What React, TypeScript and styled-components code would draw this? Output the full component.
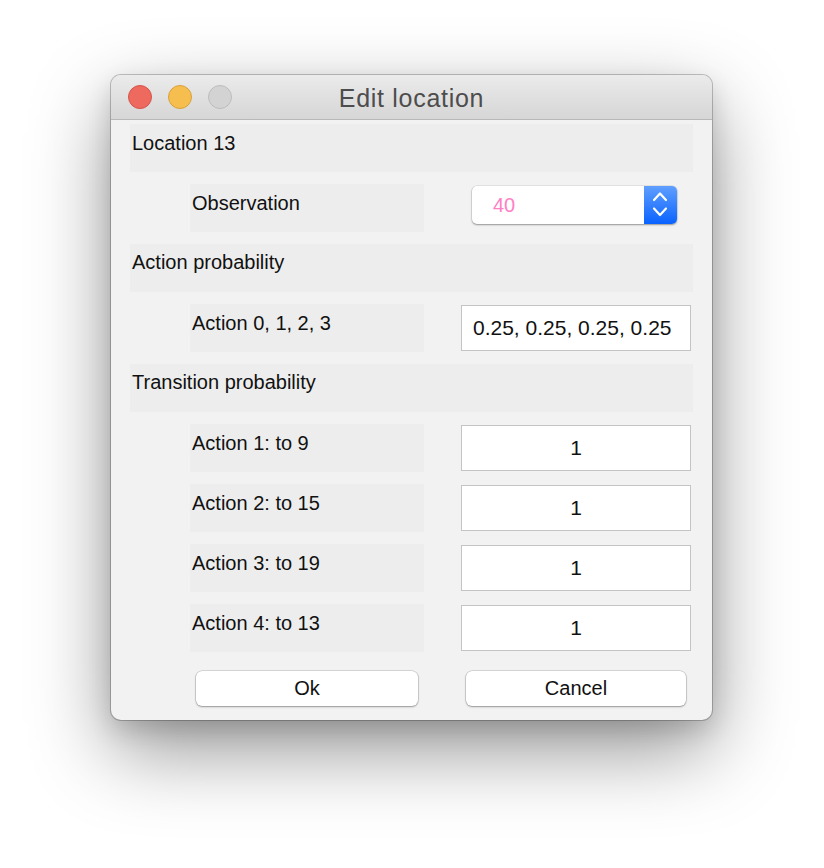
import React from 'react';
import styled, { createGlobalStyle } from 'styled-components';

const GlobalStyle = createGlobalStyle`
  body {
    margin: 0;
    background: #ffffff;
    font-family: 'Liberation Sans', Arial, sans-serif;
  }
`;

const Page = styled.div`
  padding: 75px 0 0 111px;
  height: 793px;
`;

const Window = styled.div`
  width: 601px;
  height: 645px;
  border-radius: 10px;
  overflow: hidden;
  background: #f2f2f2;
  box-shadow: 0 0 0 1px rgba(0, 0, 0, 0.22), 0 30px 80px rgba(0, 0, 0, 0.42),
    0 10px 24px rgba(0, 0, 0, 0.14);
`;

const TitleBar = styled.div`
  height: 44px;
  display: grid;
  grid-template-columns: 1fr auto 1fr;
  align-items: center;
  background: linear-gradient(#ebebeb, #d6d6d6);
  border-bottom: 1px solid #b8b8b8;
`;

const Lights = styled.div`
  display: flex;
  gap: 16px;
  padding-left: 17px;
`;

interface ILightProps {
  fill: string;
  edge: string;
}

const Light = styled.span<ILightProps>`
  width: 24px;
  height: 24px;
  box-sizing: border-box;
  border-radius: 50%;
  background: ${({ fill }) => fill};
  border: 1px solid ${({ edge }) => edge};
`;

const Title = styled.div`
  padding-top: 3px;
  font-size: 25px;
  letter-spacing: 0.7px;
  color: #4d4d4d;
`;

const Content = styled.div`
  padding: 4px 19px 0;
  display: flex;
  flex-direction: column;
  gap: 12px;
`;

interface IPanelProps {
  header?: boolean;
}

const Panel = styled.div<IPanelProps>`
  box-sizing: border-box;
  height: 48px;
  padding: ${({ header }) => (header ? '7px 2px' : '8px 2px')};
  background: #ededed;
  font-size: 20px;
  line-height: 22px;
  color: #111;
  white-space: nowrap;
`;

const SubRow = styled.div`
  display: flex;
  align-items: flex-start;
  padding-left: 60px;
  height: 48px;
`;

const SubLabel = styled(Panel)`
  width: 234px;
`;

const Field = styled.div`
  box-sizing: border-box;
  width: 230px;
  height: 46px;
  margin: 1px 0 0 37px;
  background: #ffffff;
  border: 1px solid #c4c4c4;
  display: flex;
  align-items: center;
  font-size: 21px;
  color: #111;
`;

interface IFieldTextProps {
  centered?: boolean;
}

const FieldText = styled.span<IFieldTextProps>`
  flex: 1;
  padding: 0 11px;
  text-align: ${({ centered }) => (centered ? 'center' : 'left')};
`;

const Combo = styled.div`
  width: 205px;
  height: 38px;
  margin: 2px 0 0 48px;
  display: flex;
  border-radius: 5px;
  background: #ffffff;
  box-shadow: 0 0 0 0.5px rgba(0, 0, 0, 0.12), 0 1px 2px rgba(0, 0, 0, 0.35);
  overflow: hidden;
`;

const ComboValue = styled.span`
  flex: 1;
  padding-left: 21px;
  font-size: 20px;
  line-height: 38px;
  color: #ff80c4;
`;

const Stepper = styled.div`
  width: 33px;
  height: 38px;
  background: linear-gradient(#5f9fff, #0a63ff);
`;

const ButtonRow = styled.div`
  display: flex;
  gap: 48px;
  padding-left: 66px;
  margin-top: 7px;
`;

interface IButtonProps {
  width: number;
}

const Button = styled.div<IButtonProps>`
  width: ${({ width }) => width}px;
  height: 35px;
  border-radius: 6px;
  background: #ffffff;
  box-shadow: 0 0 0 0.5px rgba(0, 0, 0, 0.22), 0 1px 2px rgba(0, 0, 0, 0.3);
  font-size: 20px;
  line-height: 35px;
  text-align: center;
  color: #111;
`;

const rows = [
  { label: 'Action 1: to 9', value: '1' },
  { label: 'Action 2: to 15', value: '1' },
  { label: 'Action 3: to 19', value: '1' },
  { label: 'Action 4: to 13', value: '1' }
];

const StepperIcon = () => (
  <svg width="33" height="38" viewBox="0 0 33 38">
    <path d="M10 14 L16 7.5 L22 14" fill="none" stroke="#fff" strokeWidth="2.2" strokeLinecap="round" strokeLinejoin="round" />
    <path d="M10 22.5 L16 29 L22 22.5" fill="none" stroke="#fff" strokeWidth="2.2" strokeLinecap="round" strokeLinejoin="round" />
  </svg>
);

const App: React.FC = () => (
  <Page>
    <GlobalStyle />
    <Window>
      <TitleBar>
        <Lights>
          <Light fill="#ee6a5f" edge="#d4544a" />
          <Light fill="#f5be4f" edge="#d8a13c" />
          <Light fill="#d3d3d3" edge="#bcbcbc" />
        </Lights>
        <Title>Edit location</Title>
        <div />
      </TitleBar>
      <Content>
        <Panel>Location 13</Panel>
        <SubRow>
          <SubLabel>Observation</SubLabel>
          <Combo>
            <ComboValue>40</ComboValue>
            <Stepper>
              <StepperIcon />
            </Stepper>
          </Combo>
        </SubRow>
        <Panel header>Action probability</Panel>
        <SubRow>
          <SubLabel>Action 0, 1, 2, 3</SubLabel>
          <Field>
            <FieldText>0.25, 0.25, 0.25, 0.25</FieldText>
          </Field>
        </SubRow>
        <Panel header>Transition probability</Panel>
        {rows.map((row) => (
          <SubRow key={row.label}>
            <SubLabel>{row.label}</SubLabel>
            <Field>
              <FieldText centered>{row.value}</FieldText>
            </Field>
          </SubRow>
        ))}
        <ButtonRow>
          <Button width={222}>Ok</Button>
          <Button width={220}>Cancel</Button>
        </ButtonRow>
      </Content>
    </Window>
  </Page>
);

export default App;
